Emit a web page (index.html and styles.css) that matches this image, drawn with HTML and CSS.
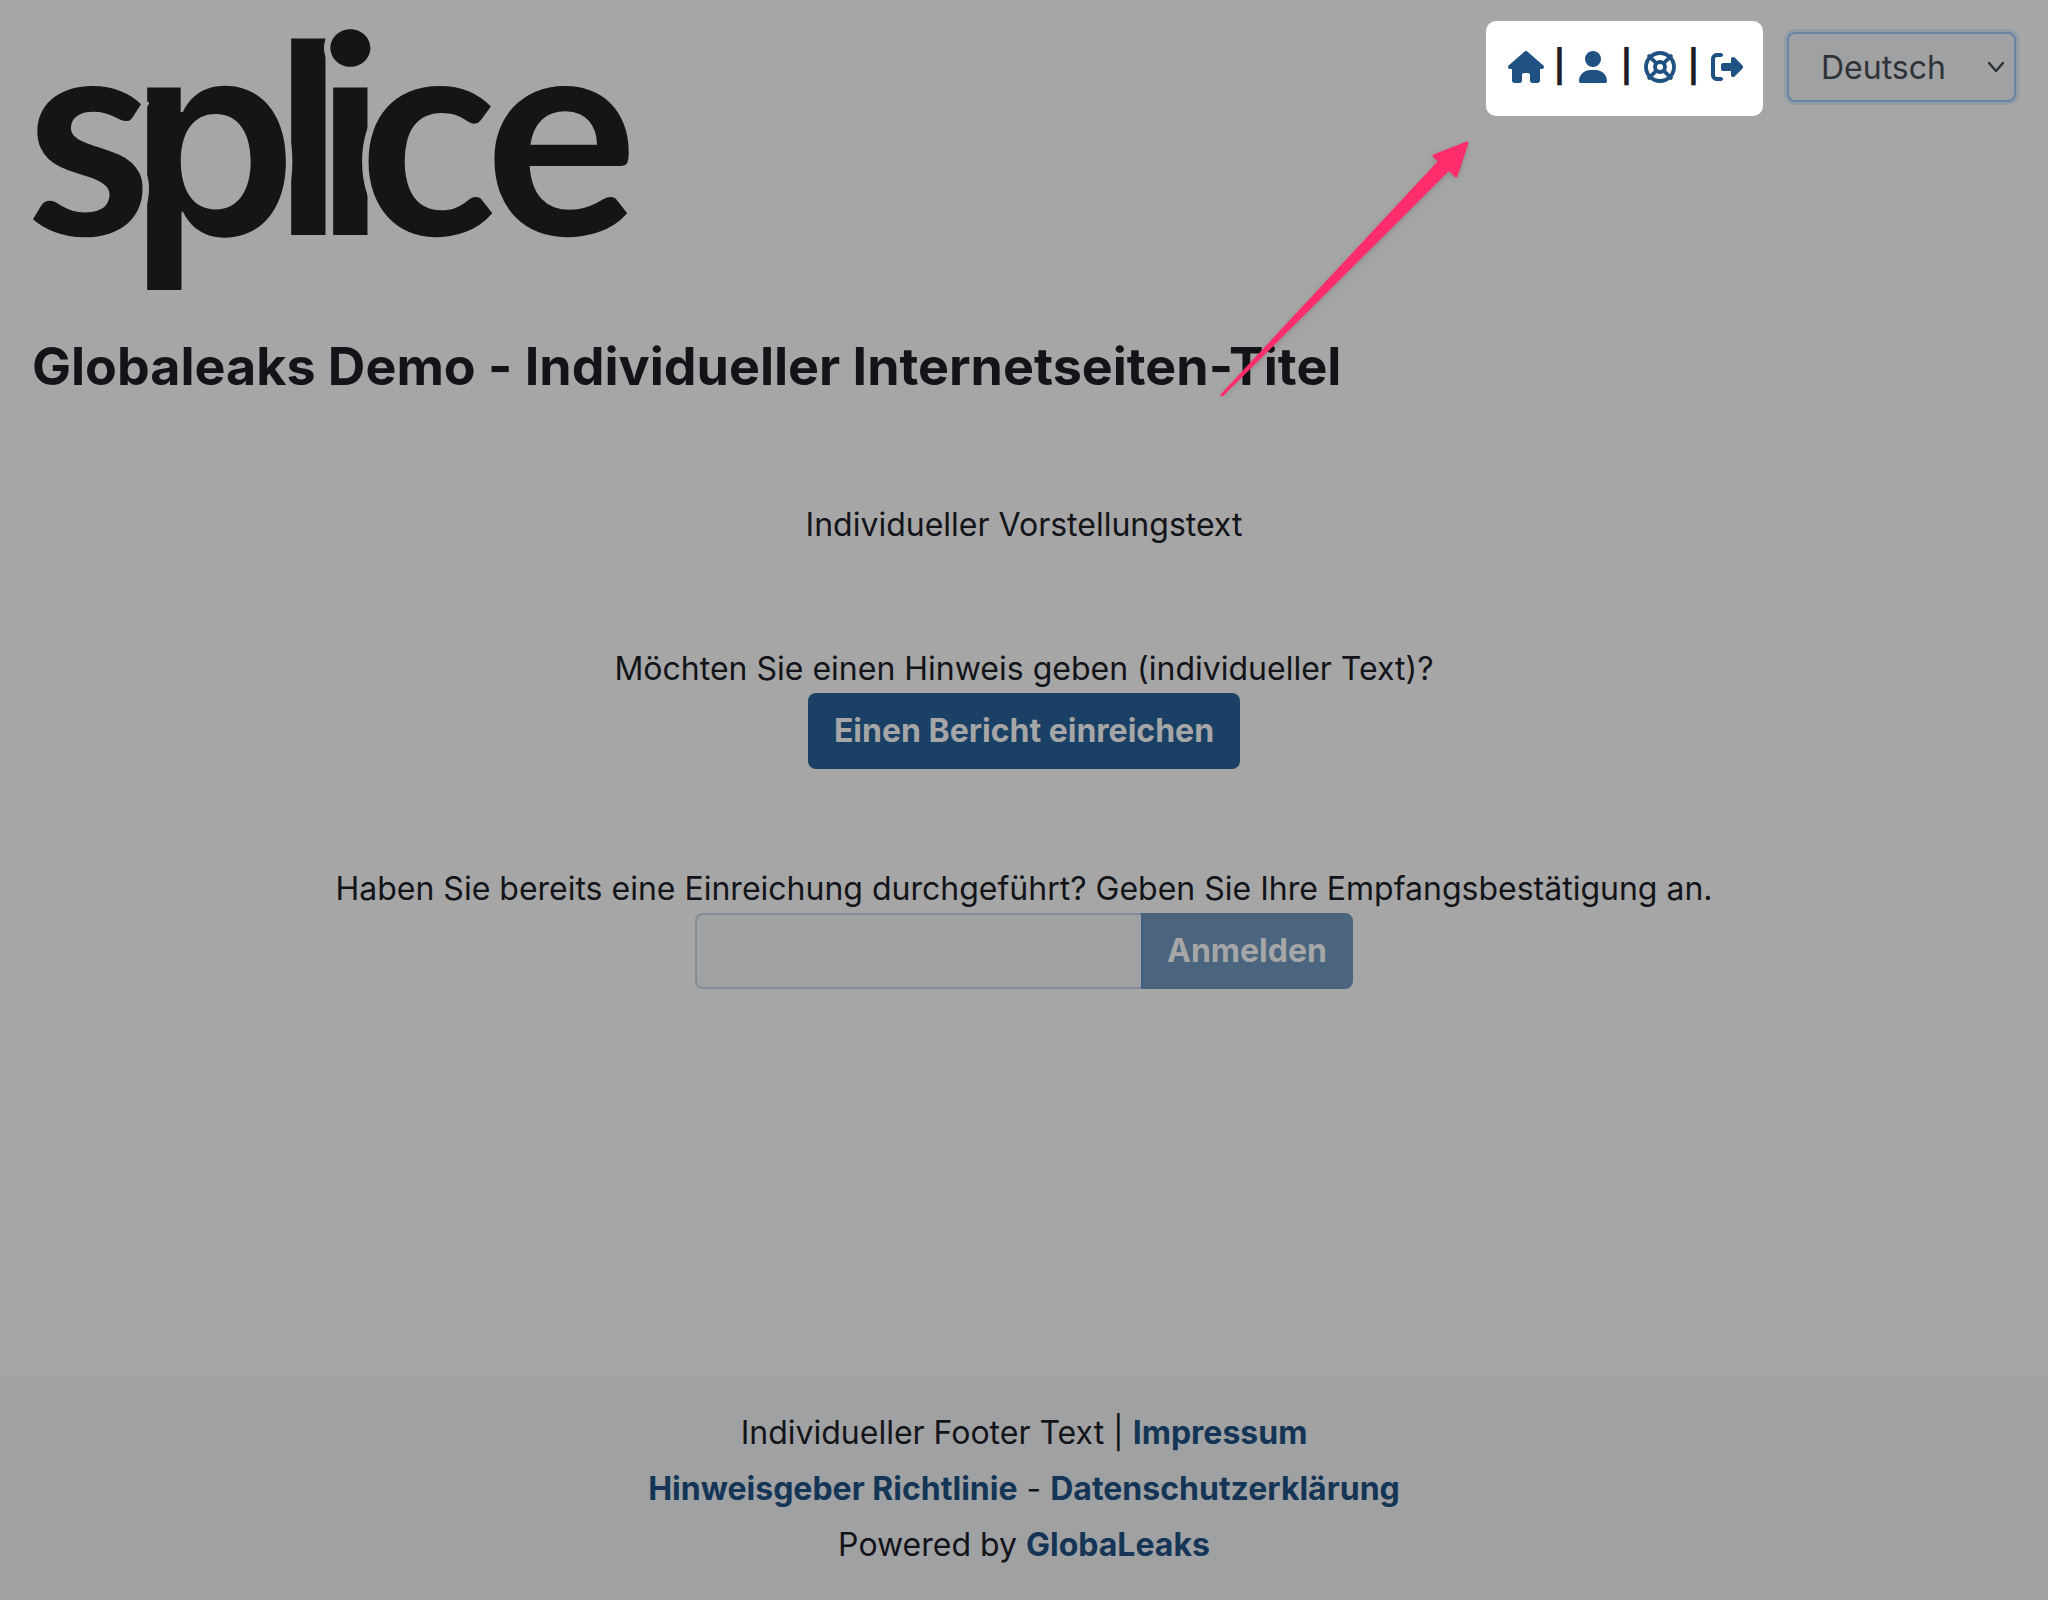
FILE: index.html
```
<!DOCTYPE html>
<html lang="de">

<head>
    <meta charset="UTF-8">
    <meta name="viewport" content="width=device-width, initial-scale=1.0">
    <title>Globaleaks Demo</title>
    <link rel="stylesheet" href="styles.css">
</head>

<body>
    <header class="header">
        <div class="header-row">
            <svg class="logo" viewBox="0 0 602 264" role="img" aria-label="splice">
                <!-- painting order decides which letter cuts into its neighbour -->
                <text class="logo-letter" x="241" y="203">l</text>
                <text class="logo-letter" x="283" y="203">i</text>
                <text class="logo-letter" x="97" y="203">p</text>
                <text class="logo-letter logo-round" x="-6" y="203">s</text>
                <text class="logo-letter logo-round" x="327" y="203">c</text>
                <text class="logo-letter logo-round" x="453" y="203">e</text>
            </svg>
            <div class="tools">
                <nav class="nav">
                    <a class="nav-link" href="#" aria-label="Startseite">
                        <svg class="icon" viewBox="0 0 576 512"><path d="M575.8 255.500c0 18-15 32.100-32 32.100h-32l.7 160.200c0 2.700-.2 5.400-.5 8.100V472c0 22.100-17.900 40-40 40h-16c-1.100 0-2.200 0-3.300-.1-1.400.1-2.800.1-4.200.1H392c-22.100 0-40-17.900-40-40v-88c0-17.700-14.300-32-32-32h-64c-17.700 0-32 14.300-32 32v88c0 22.100-17.900 40-40 40h-55.900c-1.500 0-3-.1-4.500-.2-1.200.1-2.400.2-3.600.2h-16c-22.100 0-40-17.900-40-40V287.600H32c-18 0-32-14-32-32.100 0-9 3-17 10-24L266.400 8c7-7 15-8 22-8s15 2 21 7l255.400 224.500c8 7 12 15 11 24z"/></svg>
                    </a>
                    <span class="nav-sep">|</span>
                    <a class="nav-link" href="#" aria-label="Benutzer">
                        <svg class="icon" viewBox="0 0 448 512"><path d="M224 256A128 128 0 1 0 224 0a128 128 0 1 0 0 256zm-45.700 48C79.800 304 0 383.800 0 482.300 0 498.700 13.300 512 29.700 512h388.600c16.400 0 29.700-13.300 29.700-29.700 0-98.500-79.800-178.300-178.300-178.300h-91.400z"/></svg>
                    </a>
                    <span class="nav-sep">|</span>
                    <a class="nav-link" href="#" aria-label="Hilfe">
                        <svg class="icon icon-line" viewBox="0 0 512 512">
                            <circle cx="256" cy="256" r="224"/>
                            <circle cx="256" cy="256" r="80"/>
                            <path d="M82 82l110 110M430 82L320 192M82 430l110-110M430 430L320 320"/>
                        </svg>
                    </a>
                    <span class="nav-sep">|</span>
                    <a class="nav-link" href="#" aria-label="Abmelden">
                        <svg class="icon" viewBox="0 0 512 512"><path d="M377.900 105.900L500.700 228.700c7.200 7.200 11.300 17.100 11.300 27.300s-4.100 20.100-11.300 27.300L377.900 406.100c-6.400 6.400-15 9.900-24 9.900-18.700 0-33.900-15.200-33.900-33.900V320H192c-17.700 0-32-14.300-32-32v-64c0-17.700 14.300-32 32-32h128v-62.100c0-18.700 15.200-33.900 33.900-33.900 9 0 17.600 3.600 24 9.900zM160 96H96c-17.700 0-32 14.300-32 32v256c0 17.700 14.300 32 32 32h64c17.700 0 32 14.300 32 32s-14.300 32-32 32H96c-53 0-96-43-96-96V128c0-53 43-96 96-96h64c17.700 0 32 14.300 32 32s-14.300 32-32 32z"/></svg>
                    </a>
                </nav>
                <select class="language" aria-label="Sprache">
                    <option selected>Deutsch</option>
                    <option>English</option>
                </select>
            </div>
        </div>
        <h1 class="title">Globaleaks Demo - Individueller Internetseiten-Titel</h1>
        <svg class="arrow" viewBox="0 0 260 270" aria-hidden="true">
            <path d="M12 265L230 31L224 26L257 13L246 46L239 39Z"/>
        </svg>
    </header>

    <main class="main">
        <p class="text">Individueller Vorstellungstext</p>
        <section class="block">
            <p class="text">Möchten Sie einen Hinweis geben (individueller Text)?</p>
            <button class="btn" type="button">Einen Bericht einreichen</button>
        </section>
        <form class="block">
            <label class="text" for="receipt">Haben Sie bereits eine Einreichung durchgeführt? Geben Sie Ihre Empfangsbestätigung an.</label>
            <div class="input-group">
                <input class="input" id="receipt" type="text">
                <button class="btn btn-login" type="submit" disabled>Anmelden</button>
            </div>
        </form>
    </main>

    <footer class="footer">
        <div>Individueller Footer Text | <a class="link" href="#">Impressum</a></div>
        <div><a class="link" href="#">Hinweisgeber Richtlinie</a> - <a class="link" href="#">Datenschutzerklärung</a></div>
        <div>Powered by <a class="link" href="#">GlobaLeaks</a></div>
    </footer>
</body>

</html>
```
FILE: styles.css
```
* {
    box-sizing: border-box;
}

body {
    margin: 0;
    min-height: 100vh;
    display: flex;
    flex-direction: column;
    background-color: #a6a6a6;
    color: #131419;
    font-family: Inter, "Liberation Sans", sans-serif;
    font-size: 32px;
    line-height: 48px;
    font-feature-settings: "calt" 0;
}

.header {
    position: relative;
    padding: 21px 32px 0;
}

.header-row {
    display: flex;
    justify-content: space-between;
    align-items: flex-start;
}

.logo {
    width: 602px;
    height: 264px;
    margin-top: 11px;
    overflow: visible;
}

/* the outline cuts each letter out of the one below it */
.logo-letter {
    font-size: 270px;
    font-weight: 600;
    fill: #171416;
    stroke: #a6a6a6;
    stroke-width: 13px;
    paint-order: stroke;
}

.logo-round {
    font-family: Lato, sans-serif;
    font-size: 286px;
    font-weight: 700;
}

.tools {
    display: flex;
    align-items: flex-start;
    gap: 24px;
}

.nav {
    display: flex;
    align-items: center;
    height: 95px;
    padding: 0 16px 3px 20px;
    background-color: #fff;
    border-radius: 10px;
}

.nav-link {
    display: flex;
    justify-content: center;
    width: 40px;
    color: #1f5282;
}

.nav-sep {
    width: 27px;
    text-align: center;
    font-weight: 700;
    color: #1d1e26;
}

.icon {
    height: 32px;
    fill: currentColor;
}

.icon-line {
    fill: none;
    stroke: currentColor;
    stroke-width: 62px;
    stroke-linecap: round;
}

.language {
    appearance: none;
    width: 229px;
    height: 70px;
    margin-top: 11px;
    padding: 2px 32px 0;
    border: 2px solid #6884a4;
    border-radius: 8px;
    outline: none;
    box-shadow: 0 0 0 3px #919ba6;
    background: #a0a1a3 url("data:image/svg+xml,%3Csvg xmlns='http://www.w3.org/2000/svg' viewBox='0 0 16 10'%3E%3Cpath fill='none' stroke='%232f3338' stroke-width='2.5' stroke-linecap='round' stroke-linejoin='round' d='M1 1l7 8 7-8'/%3E%3C/svg%3E") no-repeat right 10px center / 16px 10px;
    color: #2f3338;
    font: inherit;
}

.title {
    margin: 40px 0 0;
    font-size: 52px;
    line-height: 62px;
    font-weight: 700;
}

.arrow {
    position: absolute;
    top: 130px;
    right: 578px;
    width: 260px;
    height: 270px;
    fill: #ff2d6b;
    stroke: #ff2d6b;
    stroke-width: 3px;
    stroke-linejoin: round;
    filter: drop-shadow(0 2px 3px rgba(0, 0, 0, 0.15));
}

.main {
    flex: 1;
    display: flex;
    flex-direction: column;
    align-items: center;
    gap: 96px;
    padding: 103px 32px 96px;
    text-align: center;
}

.block {
    display: flex;
    flex-direction: column;
    align-items: center;
}

.text {
    margin: 0;
}

.btn {
    height: 76px;
    padding: 0 26px;
    border: 0;
    border-radius: 8px;
    background-color: #1b4066;
    color: #a6a6a6;
    font: inherit;
    font-weight: 700;
}

.input-group {
    display: flex;
}

.input {
    width: 446px;
    height: 76px;
    padding: 0 24px;
    border: 2px solid #858b98;
    border-right: 0;
    border-radius: 8px 0 0 8px;
    background-color: #a0a1a3;
    color: inherit;
    font: inherit;
}

.btn-login {
    padding-left: 24px;
    border-left: 2px solid #3c5f82;
    border-radius: 0 8px 8px 0;
    background-color: #4b657f;
}

.footer {
    padding: 29px 32px 27px;
    background-color: #a0a1a3;
    text-align: center;
    line-height: 56px;
}

.link {
    color: #143555;
    font-weight: 700;
    text-decoration: none;
}
```
